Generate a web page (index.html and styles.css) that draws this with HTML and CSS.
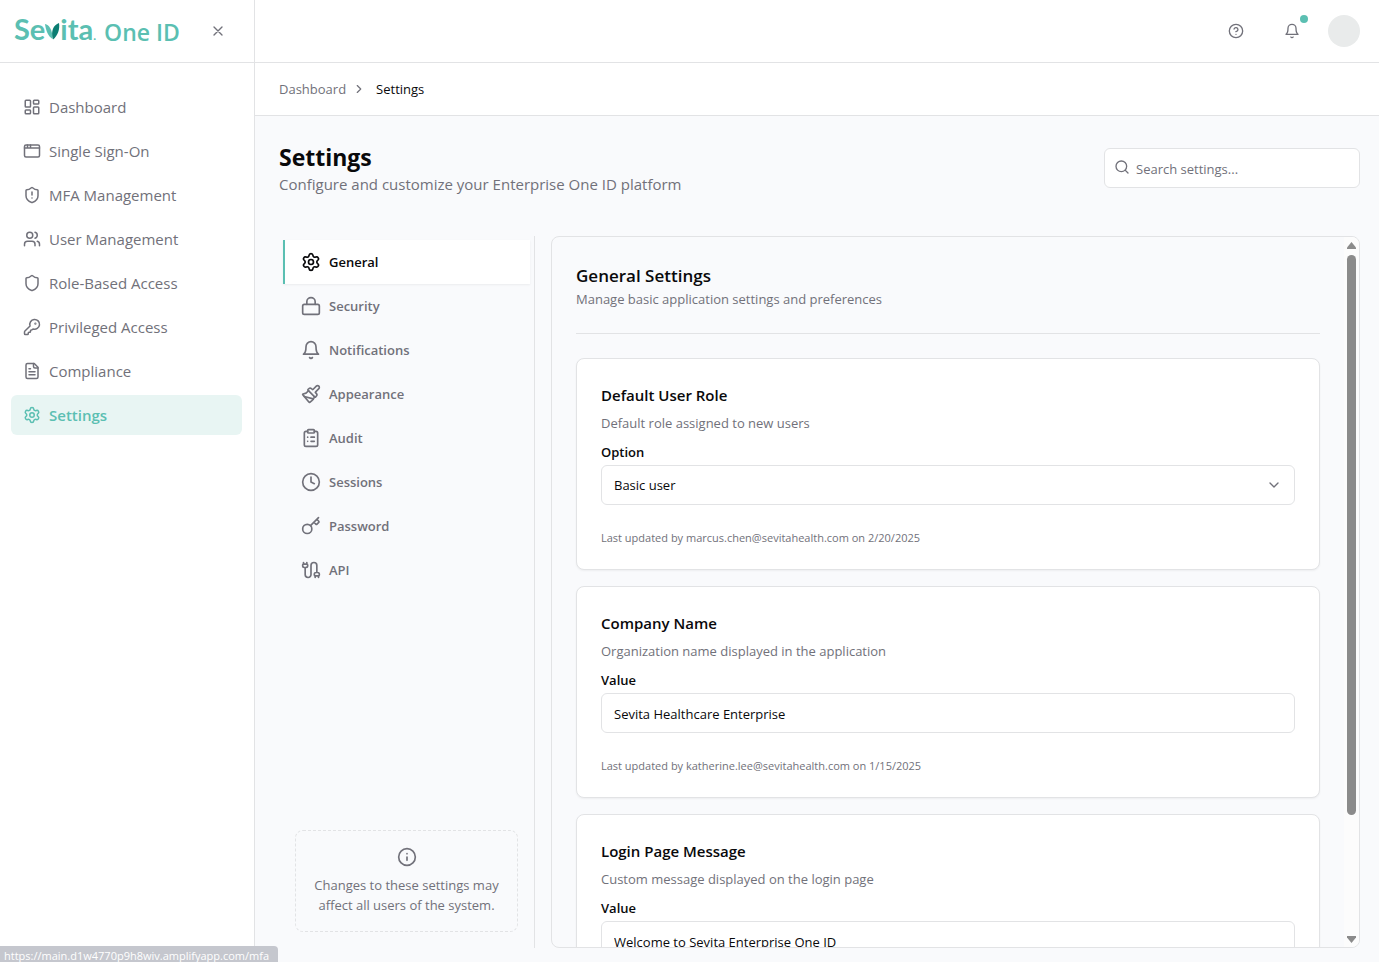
FILE: index.html
```html
<!DOCTYPE html>
<html lang="en">
<head>
<meta charset="utf-8">
<title>Settings - Sevita One ID</title>
<link rel="stylesheet" href="styles.css">
</head>
<body>
<div class="app">
  <aside class="sidebar">
    <div class="brand">
      <span class="logo" role="img" aria-label="Sevita">Se<svg class="logo-leaf" viewBox="0 0 15 17"><path d="M0 1C4 2 7.500 6 7.500 16C3 13 1 8 0 1Z" fill="#5bbfb2"/><path d="M14 0C8.500 2 5.500 8 8 16.500C13 12.500 15 6 14 0Z" fill="#0b7d72"/></svg>ita<span class="logo-mark">.</span></span>
      <span class="product">One ID</span>
      <button class="icon-btn close" aria-label="Close sidebar"><svg class="icon s16" viewBox="0 0 24 24"><path d="M18 6 6 18M6 6l12 12"/></svg></button>
    </div>
    <nav class="menu" aria-label="Main">
      <a class="menu-item" href="#"><svg class="icon s18" viewBox="0 0 24 24"><rect width="7" height="9" x="3" y="3" rx="1"/><rect width="7" height="5" x="14" y="3" rx="1"/><rect width="7" height="9" x="14" y="12" rx="1"/><rect width="7" height="5" x="3" y="16" rx="1"/></svg>Dashboard</a>
      <a class="menu-item" href="#"><svg class="icon s18" viewBox="0 0 24 24"><rect x="2" y="4" width="20" height="16" rx="2"/><path d="M10 4v4M2 8h20M6 4v4"/></svg>Single Sign-On</a>
      <a class="menu-item" href="#"><svg class="icon s18" viewBox="0 0 24 24"><path d="M20 13c0 5-3.500 7.500-7.660 8.950a1 1 0 0 1-.67-.01C7.500 20.500 4 18 4 13V6a1 1 0 0 1 1-1c2 0 4.500-1.200 6.240-2.720a1.170 1.170 0 0 1 1.520 0C14.510 3.810 17 5 19 5a1 1 0 0 1 1 1zM12 8v4M12 16h.01"/></svg>MFA Management</a>
      <a class="menu-item" href="#"><svg class="icon s18" viewBox="0 0 24 24"><path d="M16 21v-2a4 4 0 0 0-4-4H6a4 4 0 0 0-4 4v2"/><circle cx="9" cy="7" r="4"/><path d="M22 21v-2a4 4 0 0 0-3-3.870M16 3.130a4 4 0 0 1 0 7.750"/></svg>User Management</a>
      <a class="menu-item" href="#"><svg class="icon s18" viewBox="0 0 24 24"><path d="M20 13c0 5-3.500 7.500-7.660 8.950a1 1 0 0 1-.67-.01C7.500 20.500 4 18 4 13V6a1 1 0 0 1 1-1c2 0 4.500-1.200 6.240-2.720a1.170 1.170 0 0 1 1.520 0C14.510 3.810 17 5 19 5a1 1 0 0 1 1 1z"/></svg>Role-Based Access</a>
      <a class="menu-item" href="#"><svg class="icon s18" viewBox="0 0 24 24"><path d="M2.586 17.414A2 2 0 0 0 2 18.828V21a1 1 0 0 0 1 1h3a1 1 0 0 0 1-1v-1a1 1 0 0 1 1-1h1a1 1 0 0 0 1-1v-1a1 1 0 0 1 1-1h.172a2 2 0 0 0 1.414-.586l.814-.814a6.500 6.500 0 1 0-4-4z"/><circle cx="16.500" cy="7.500" r=".5" fill="currentColor"/></svg>Privileged Access</a>
      <a class="menu-item" href="#"><svg class="icon s18" viewBox="0 0 24 24"><path d="M15 2H6a2 2 0 0 0-2 2v16a2 2 0 0 0 2 2h12a2 2 0 0 0 2-2V7Z"/><path d="M14 2v4a2 2 0 0 0 2 2h4M10 9H8M16 13H8M16 17H8"/></svg>Compliance</a>
      <a class="menu-item active" href="#" aria-current="page"><svg class="icon s18" viewBox="0 0 24 24"><path d="M9.671 4.136a2.340 2.340 0 0 1 4.659 0 2.340 2.340 0 0 0 3.319 1.915 2.340 2.340 0 0 1 2.330 4.033 2.340 2.340 0 0 0 0 3.831 2.340 2.340 0 0 1-2.330 4.033 2.340 2.340 0 0 0-3.319 1.915 2.340 2.340 0 0 1-4.659 0 2.340 2.340 0 0 0-3.320-1.915 2.340 2.340 0 0 1-2.330-4.033 2.340 2.340 0 0 0 0-3.831A2.340 2.340 0 0 1 6.350 6.051a2.340 2.340 0 0 0 3.319-1.915"/><circle cx="12" cy="12" r="3"/></svg>Settings</a>
    </nav>
  </aside>

  <div class="page">
    <header class="topbar">
      <button class="icon-btn" aria-label="Help"><svg class="icon s16" viewBox="0 0 24 24"><circle cx="12" cy="12" r="10"/><path d="M9.090 9a3 3 0 0 1 5.830 1c0 2-3 3-3 3M12 17h.01"/></svg></button>
      <button class="icon-btn" aria-label="Notifications"><svg class="icon s16" viewBox="0 0 24 24"><path d="M6 8a6 6 0 0 1 12 0c0 7 3 9 3 9H3s3-2 3-9M10.300 21a1.940 1.940 0 0 0 3.400 0"/></svg><span class="dot"></span></button>
      <button class="avatar" aria-label="Account"></button>
    </header>
    <nav class="crumbs" aria-label="Breadcrumb">
      <a href="#">Dashboard</a>
      <svg class="icon s14" viewBox="0 0 24 24"><path d="m9 18 6-6-6-6"/></svg>
      <span class="current">Settings</span>
    </nav>

    <main class="main">
      <div class="page-head">
        <div>
          <h1>Settings</h1>
          <p class="lead">Configure and customize your Enterprise One ID platform</p>
        </div>
        <label class="search">
          <svg class="icon s16" viewBox="0 0 24 24"><circle cx="11" cy="11" r="8"/><path d="m21 21-4.300-4.300"/></svg>
          <input type="search" placeholder="Search settings..." aria-label="Search settings">
        </label>
      </div>

      <div class="columns">
        <div class="tabs">
          <div class="tab-list">
            <button class="tab active"><svg class="icon s20" viewBox="0 0 24 24"><path d="M9.671 4.136a2.340 2.340 0 0 1 4.659 0 2.340 2.340 0 0 0 3.319 1.915 2.340 2.340 0 0 1 2.330 4.033 2.340 2.340 0 0 0 0 3.831 2.340 2.340 0 0 1-2.330 4.033 2.340 2.340 0 0 0-3.319 1.915 2.340 2.340 0 0 1-4.659 0 2.340 2.340 0 0 0-3.320-1.915 2.340 2.340 0 0 1-2.330-4.033 2.340 2.340 0 0 0 0-3.831A2.340 2.340 0 0 1 6.350 6.051a2.340 2.340 0 0 0 3.319-1.915"/><circle cx="12" cy="12" r="3"/></svg>General</button>
            <button class="tab"><svg class="icon s20" viewBox="0 0 24 24"><rect width="20" height="12" x="2" y="10" rx="2"/><path d="M7 10V7a5 5 0 0 1 10 0v3"/></svg>Security</button>
            <button class="tab"><svg class="icon s20" viewBox="0 0 24 24"><path d="M6 8a6 6 0 0 1 12 0c0 7 3 9 3 9H3s3-2 3-9M10.300 21a1.940 1.940 0 0 0 3.400 0"/></svg>Notifications</button>
            <button class="tab"><svg class="icon s20" viewBox="0 0 24 24"><path d="m14.622 17.897-10.680-2.913"/><path d="M18.376 2.622a1 1 0 1 1 3.002 3.002L17.360 9.643a.5.5 0 0 0 0 .707l.944.944a2.410 2.410 0 0 1 0 3.408l-.944.944a.5.5 0 0 1-.707 0L8.354 7.348a.5.5 0 0 1 0-.707l.944-.944a2.410 2.410 0 0 1 3.408 0l.944.944a.5.5 0 0 0 .707 0z"/><path d="M9 8c-1.804 2.710-3.970 3.460-6.583 3.948a.507.507 0 0 0-.302.819l7.320 8.883a1 1 0 0 0 1.185.204C12.735 20.405 16 16.792 16 15"/></svg>Appearance</button>
            <button class="tab"><svg class="icon s20" viewBox="0 0 24 24"><rect width="8" height="4" x="8" y="2" rx="1"/><path d="M16 4h2a2 2 0 0 1 2 2v14a2 2 0 0 1-2 2H6a2 2 0 0 1-2-2V6a2 2 0 0 1 2-2h2M12 11h4M12 16h4M8 11h.01M8 16h.01"/></svg>Audit</button>
            <button class="tab"><svg class="icon s20" viewBox="0 0 24 24"><circle cx="12" cy="12" r="10"/><path d="M12 6v6l4 2"/></svg>Sessions</button>
            <button class="tab"><svg class="icon s20" viewBox="0 0 24 24"><path d="m15.500 7.500 2.300 2.300a1 1 0 0 0 1.400 0l2.100-2.100a1 1 0 0 0 0-1.400L19 4M21 2l-9.600 9.600"/><circle cx="7.500" cy="15.500" r="5.500"/></svg>Password</button>
            <button class="tab"><svg class="icon s20" viewBox="0 0 24 24"><path d="M17 21v-2a1 1 0 0 1-1-1v-1a2 2 0 0 1 2-2h2a2 2 0 0 1 2 2v1a1 1 0 0 1-1 1v2M19 15V6.500a1 1 0 0 0-7 0v11a1 1 0 0 1-7 0V9M21 19h-4M3 5h4V3M7 5a1 1 0 0 1 1 1v1a2 2 0 0 1-2 2H4a2 2 0 0 1-2-2V6a1 1 0 0 1 1-1V3"/></svg>API</button>
          </div>
          <div class="notice">
            <svg class="icon s20" viewBox="0 0 24 24"><circle cx="12" cy="12" r="10"/><path d="M12 16v-4M12 8h.01"/></svg>
            <p>Changes to these settings may affect all users of the system.</p>
          </div>
        </div>

        <section class="panel">
          <div class="panel-body">
            <div class="panel-head">
              <h2>General Settings</h2>
              <p>Manage basic application settings and preferences</p>
            </div>
            <div class="card">
              <h3>Default User Role</h3>
              <p class="desc">Default role assigned to new users</p>
              <label for="role">Option</label>
              <div class="select">
                <select class="field" id="role"><option>Basic user</option></select>
                <svg class="icon s16" viewBox="0 0 24 24"><path d="m6 9 6 6 6-6"/></svg>
              </div>
              <p class="updated">Last updated by marcus.chen@sevitahealth.com on 2/20/2025</p>
            </div>
            <div class="card">
              <h3>Company Name</h3>
              <p class="desc">Organization name displayed in the application</p>
              <label for="company">Value</label>
              <input class="field" id="company" type="text" value="Sevita Healthcare Enterprise">
              <p class="updated">Last updated by katherine.lee@sevitahealth.com on 1/15/2025</p>
            </div>
            <div class="card">
              <h3>Login Page Message</h3>
              <p class="desc">Custom message displayed on the login page</p>
              <label for="message">Value</label>
              <input class="field" id="message" type="text" value="Welcome to Sevita Enterprise One ID">
            </div>
          </div>
          <div class="scrollbar" aria-hidden="true">
            <svg class="arrow" viewBox="0 0 9 7"><path d="M4.500 0 9 5.500V7H0V5.500Z"/></svg>
            <div class="track"><div class="thumb"></div></div>
            <svg class="arrow" viewBox="0 0 9 7"><path d="M4.500 7 9 1.500V0H0V1.500Z"/></svg>
          </div>
        </section>
      </div>
    </main>
  </div>
</div>
<div class="status">https://main.d1w4770p9h8wiv.amplifyapp.com/mfa</div>
</body>
</html>
```
FILE: styles.css
```css
:root {
  --teal: #5bbfb2;
  --ink: #09090b;
  --muted: #71717a;
  --line: #e2e3e5;
  --canvas: #f9fafc;
}
* { box-sizing: border-box; }
body {
  margin: 0;
  font: 13px/20px "Open Sans", "Noto Sans", sans-serif;
  color: var(--ink);
  background: #fff;
}
h1, h2, h3, p { margin: 0; }
a { color: inherit; text-decoration: none; }
button, input, select { font: inherit; color: inherit; }
button { border: 0; background: none; padding: 0; cursor: pointer; }

.icon { flex: none; fill: none; stroke: currentColor; stroke-width: 2; stroke-linecap: round; stroke-linejoin: round; }
.s14 { width: 14px; height: 14px; }
.s16 { width: 16px; height: 16px; }
.s18 { width: 18px; height: 18px; }
.s20 { width: 20px; height: 20px; }

.app { display: flex; height: 100vh; overflow: hidden; }

.sidebar { flex: none; width: 255px; border-right: 1px solid var(--line); }
.brand { display: flex; align-items: center; height: 63px; padding-left: 14px; border-bottom: 1px solid var(--line); }
.logo { display: flex; align-items: baseline; padding-top: 2px; font: 700 29px/32px Lato, sans-serif; color: var(--teal); }
.logo-leaf { width: 15px; height: 17px; }
.logo-mark { font-size: 12px; }
.product { margin-left: 8px; padding-top: 2px; font-size: 23px; line-height: 32px; font-weight: 600; color: var(--teal); }
.icon-btn { position: relative; display: flex; align-items: center; justify-content: center; width: 32px; height: 32px; color: var(--muted); }
.close { margin-left: auto; margin-right: 20px; }

.menu { display: flex; flex-direction: column; gap: 4px; padding: 24px 12px 24px 11px; }
.menu-item { display: flex; align-items: center; gap: 8px; height: 40px; padding: 0 12px; border-radius: 6px; font-size: 15px; color: var(--muted); }
.menu-item.active { background: #e8f5f3; color: var(--teal); font-weight: 600; }

.page { flex: 1; min-width: 0; display: flex; flex-direction: column; }
.topbar { flex: none; display: flex; align-items: center; justify-content: flex-end; gap: 24px; height: 63px; padding-right: 19px; border-bottom: 1px solid var(--line); }
.topbar .avatar { margin-left: -4px; }
.dot { position: absolute; top: 0; right: 0; width: 8px; height: 8px; border-radius: 50%; background: var(--teal); }
.avatar { width: 32px; height: 32px; border-radius: 50%; background: #e9ebeb; }
.crumbs { flex: none; display: flex; align-items: center; gap: 6px; height: 53px; padding: 0 24px; border-bottom: 1px solid var(--line); color: var(--muted); }
.crumbs .current { margin-left: 4px; color: var(--ink); }

.main { flex: 1; min-height: 0; display: flex; flex-direction: column; gap: 40px; padding: 24px 19px 14px 24px; background: var(--canvas); }
.page-head { display: flex; align-items: center; justify-content: space-between; }
h1 { padding-top: 2px; font-size: 23px; line-height: 30px; font-weight: 700; }
.lead { font-size: 15px; line-height: 24px; color: var(--muted); }
.search { display: flex; align-items: center; gap: 6px; width: 256px; height: 40px; padding: 0 9px; border: 1px solid var(--line); border-radius: 6px; background: #fff; color: var(--muted); }
.search .icon { margin-bottom: 2px; }
.search input { flex: 1; min-width: 0; padding: 2px 0 0; border: 0; outline: 0; background: none; }
.search input::placeholder { color: var(--muted); opacity: 1; }

.columns { flex: 1; min-height: 0; display: flex; gap: 16px; }
.tabs { flex: none; width: 256px; display: flex; flex-direction: column; justify-content: space-between; padding: 4px 4px 16px; border-right: 1px solid var(--line); }
.tab-list { display: flex; flex-direction: column; }
.tab { display: flex; align-items: center; gap: 8px; height: 44px; padding: 0 16px; border-left: 2px solid transparent; color: var(--muted); font-weight: 600; }
.tab.active { border-left-color: var(--teal); background: #fff; color: var(--ink); box-shadow: 0 1px 2px rgba(0, 0, 0, .06); }
.notice { display: flex; flex-direction: column; align-items: center; gap: 8px; margin: 0 12px; padding: 16px 12px; border: 1px dashed var(--line); border-radius: 8px; text-align: center; color: var(--muted); }

.panel { flex: 1; min-width: 0; display: flex; border: 1px solid var(--line); border-radius: 8px; overflow: hidden; }
.panel-body { flex: 1; min-width: 0; padding: 24px; overflow: hidden; }
.panel-head { padding-bottom: 24px; margin-bottom: 24px; border-bottom: 1px solid var(--line); }
.panel-head p { color: var(--muted); }
h2 { padding-top: 2px; font-size: 17px; line-height: 26px; font-weight: 600; }
.card { display: flex; flex-direction: column; margin-bottom: 16px; padding: 24px; border: 1px solid var(--line); border-radius: 8px; background: #fff; box-shadow: 0 1px 2px rgba(0, 0, 0, .05); }
h3 { font-size: 15px; line-height: 24px; font-weight: 600; }
.desc { margin: 6px 0 9px; color: var(--muted); }
.card label { margin-bottom: 3px; font-weight: 600; }
.field { width: 100%; height: 40px; padding: 0 12px; border: 1px solid var(--line); border-radius: 6px; background: #fff; appearance: none; }
input.field { padding-top: 2px; }
.select { position: relative; }
.select .icon { position: absolute; top: 12px; right: 13px; color: var(--muted); pointer-events: none; }
.updated { margin-top: 25px; font-size: 11px; line-height: 15px; color: var(--muted); }

.scrollbar { flex: none; display: flex; flex-direction: column; align-items: center; gap: 6px; width: 15px; padding: 5px 0 4px; background: #fcfcfc; }
.arrow { flex: none; width: 9px; height: 7px; fill: #8b8b8b; }
.track { flex: 1; width: 9px; }
.thumb { height: 83%; border-radius: 5px; background: #8b8b8b; }

.status { position: fixed; left: 0; bottom: 0; height: 16px; padding: 0 9px 0 4px; overflow: hidden; border-top-right-radius: 4px; background: #c5c7ce; color: #fff; font-size: 11px; line-height: 20px; white-space: nowrap; }
```
